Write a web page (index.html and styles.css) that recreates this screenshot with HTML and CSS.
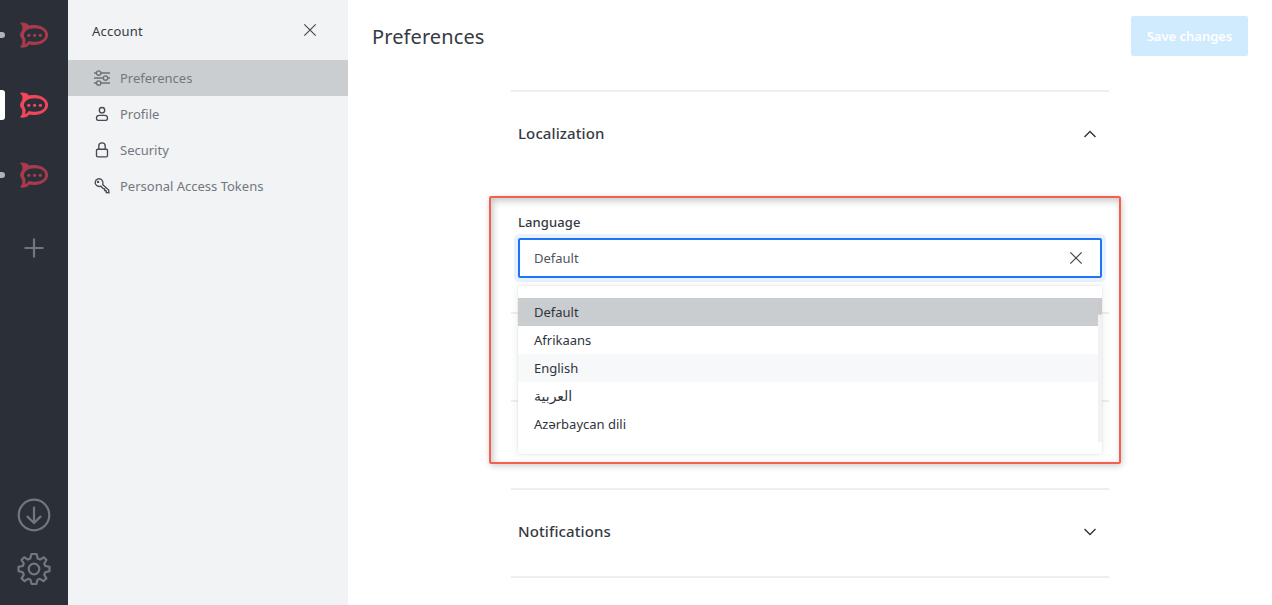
FILE: index.html
```html
<!DOCTYPE html>
<html lang="en">
<head>
<meta charset="utf-8">
<title>Preferences</title>
<link rel="stylesheet" href="styles.css">
</head>
<body>
<svg class="defs" width="0" height="0">
  <symbol id="chat" viewBox="0 0 30 28">
    <path d="M1.600 2.200C5 1.500 8.300 2.600 10.300 4.900C20 2.900 28.600 7.400 28.600 14C28.600 20.700 20 25 10.500 23C8 26.100 4.500 26.500 1.600 25.900C4.200 23.600 4.100 20.500 3.500 18.500C1 15.500 1 12.300 3.500 9.600C4.500 6.500 4 4.200 1.600 2.200Z" fill="currentColor" stroke="currentColor" stroke-width="1" stroke-linejoin="round"/>
    <path class="hollow" d="M16 7.300C22 7.300 26.200 10.100 26.200 14C26.200 18 21.800 20.700 16 20.700C13.500 20.700 11.500 20.400 9.800 19.900C8.500 21.600 7.300 22.700 5.900 23.300C6.600 21.200 6.900 19.300 6.200 17.400C4.200 14.800 4.400 12.200 6.800 9.900C9.200 8 12.200 7.300 16 7.300Z"/>
    <g fill="currentColor"><circle cx="9.800" cy="14.300" r="1.600"/><circle cx="15.600" cy="14.300" r="1.600"/><circle cx="21.300" cy="14.300" r="1.600"/></g>
  </symbol>
  <symbol id="cross" viewBox="0 0 16 16"><path d="M2.300 2.300L13.700 13.700M13.700 2.300L2.300 13.700"/></symbol>
</svg>
<div class="app">
  <nav class="servers">
    <div class="server unread"><svg class="logo"><use href="#chat"/></svg></div>
    <div class="server selected"><svg class="logo"><use href="#chat"/></svg></div>
    <div class="server unread"><svg class="logo"><use href="#chat"/></svg></div>
    <div class="add"><svg class="line" width="20" height="20" viewBox="0 0 20 20"><path d="M10 .5V19.500M.5 10H19.500"/></svg></div>
    <div class="tools">
      <svg class="line" width="34" height="34" viewBox="0 0 34 34"><circle cx="17" cy="17" r="15.300"/><path d="M17 9.500V24.600M10.500 18.600L17 25L23.500 18.600" stroke-linecap="round" stroke-linejoin="round"/></svg>
      <svg class="line" width="34" height="34" viewBox="0 0 34 34"><circle cx="17" cy="17" r="5.300"/><path stroke-linejoin="round" d="M14.500 2H19.500L20.800 6.600L23.100 7.600L26.800 5.300L29.500 8L27.200 11.500L28.300 14L32.500 14.900V19.100L28.300 20.300L27.200 22.800L29.500 26.300L26.500 29.100L23 26.800L20.500 27.800L19.400 32H14.600L13.500 27.800L11 26.800L7.500 29.100L4.500 26.300L6.800 22.800L5.700 20.300L1.500 19.100V14.900L5.700 14L6.800 11.500L4.500 8L7.200 5.300L10.900 7.600L13.200 6.600Z"/></svg>
    </div>
  </nav>

  <aside class="account">
    <header class="account-head"><span>Account</span><svg class="close"><use href="#cross"/></svg></header>
    <a class="entry current"><svg class="glyph" viewBox="0 0 20 20"><path d="M2 5H4.400M9 5H18M2 10H11.200M15.800 10H18M2 15H4.400M9 15H18"/><circle cx="6.700" cy="5" r="2.200"/><circle cx="13.500" cy="10" r="2.200"/><circle cx="6.700" cy="15" r="2.200"/></svg><span>Preferences</span></a>
    <a class="entry"><svg class="glyph dark" viewBox="0 0 20 20"><circle cx="10" cy="6.200" r="2.700"/><path d="M7.300 11.300H12.700C14.500 11.300 15.500 12.400 15.500 14C15.500 15.400 15 16.300 14 16.300H6C5 16.300 4.500 15.400 4.500 14C4.500 12.400 5.500 11.300 7.300 11.300Z"/></svg><span>Profile</span></a>
    <a class="entry"><svg class="glyph dark" viewBox="0 0 20 20"><rect x="4.500" y="9.200" width="11" height="7.600" rx="1.300"/><path d="M6.800 9V5.900C6.800 1.900 13.200 1.900 13.200 5.900V9"/></svg><span>Security</span></a>
    <a class="entry"><svg class="glyph dark" viewBox="0 0 20 20"><path d="M10.800 8.700L16.700 14L16.900 16.700L14.300 16.500V15L12.700 14.500V13L11 12.500L8.800 10.200C5.500 11.200 2.800 8.900 3.200 6C3.700 2.500 8 1.700 10 4.200C11.200 5.700 11.300 7.200 10.800 8.700Z"/><circle cx="6.100" cy="5.900" r=".5"/></svg><span>Personal Access Tokens</span></a>
  </aside>

  <main class="page">
    <header class="page-head"><h1>Preferences</h1><button class="save">Save changes</button></header>
    <div class="accordion">
      <section class="item open">
        <div class="item-head"><h2>Localization</h2><svg class="chevron" viewBox="0 0 14 10"><path d="M1.500 8L7 2.500L12.500 8"/></svg></div>
        <div class="field">
          <label>Language</label>
          <div class="select"><span>Default</span><svg class="clear"><use href="#cross"/></svg>
            <div class="menu">
              <div class="options">
                <div class="option active">Default</div>
                <div class="option">Afrikaans</div>
                <div class="option hover">English</div>
                <div class="option"><bdi class="arabic">العربية</bdi></div>
                <div class="option">Azərbaycan dili</div>
              </div>
              <div class="track"><div class="thumb"></div></div>
            </div>
          </div>
          <div class="frame"></div>
        </div>
      </section>
      <section class="item"></section>
      <section class="item"></section>
      <section class="item last">
        <div class="item-head"><h2>Notifications</h2><svg class="chevron" viewBox="0 0 14 10"><path d="M1.500 2L7 7.500L12.500 2"/></svg></div>
      </section>
    </div>
  </main>
</div>
</body>
</html>
```
FILE: styles.css
```css
* { box-sizing: border-box; }
body { margin: 0; font-family: "Noto Sans", "Open Sans", sans-serif; font-size: 13px; color: #353a43; background: #fff; overflow: hidden; }
.defs { position: absolute; }
.app { display: flex; height: 605px; }

.servers { width: 68px; background: #2b2f38; display: flex; flex-direction: column; }
.server { height: 70px; display: flex; align-items: center; justify-content: center; position: relative; color: #aa3a4c; }
.server.selected { color: #f5455c; }
.server::before { content: ""; position: absolute; left: 0; }
.unread::before { top: 32px; width: 5px; height: 6px; background: #b0b2b5; border-radius: 0 3px 3px 0; }
.selected::before { top: 20px; width: 5px; height: 30px; background: #fff; border-radius: 0 3px 3px 0; }
.logo { width: 30px; height: 28px; }
.hollow { fill: #2b2f38; }
.line { fill: none; stroke: #72777f; stroke-width: 2.2; }
.add { height: 76px; display: flex; align-items: center; justify-content: center; }
.tools { margin-top: auto; padding-bottom: 19px; display: flex; flex-direction: column; align-items: center; gap: 20px; }

.account { width: 280px; background: #f1f3f5; }
.account-head { height: 60px; padding: 2px 30px 0 24px; display: flex; align-items: center; justify-content: space-between; letter-spacing: .2px; }
.close, .clear { width: 16px; height: 16px; fill: none; stroke: #454a52; stroke-width: 1.2; }
.close { margin-top: -2px; }
.entry { height: 36px; padding-left: 24px; display: flex; align-items: center; gap: 8px; color: #72777f; }
.current { background: #cbced1; }
.glyph { width: 20px; height: 20px; fill: none; stroke: #6c727a; stroke-width: 1.35; }
.dark { stroke: #454a52; }

.page { flex: 1; min-width: 0; }
.page-head { height: 90px; padding: 16px 24px 0; display: flex; justify-content: space-between; align-items: flex-start; }
h1 { margin: 6px 0 0; font-size: 20px; line-height: 30px; font-weight: 400; letter-spacing: .1px; }
.save { width: 117px; height: 40px; padding: 0; border: 0; border-radius: 2px; background: #d1ebfe; color: #fff; font: 600 13px "Noto Sans", sans-serif; }
.accordion { width: 598px; margin-left: 163px; }
.item { height: 88px; border-top: 2px solid #eeeeef; }
.item.open { height: 222px; }
.item.last { height: 90px; border-bottom: 2px solid #eeeeef; }
.item-head { height: 84px; padding: 0 12px 0 7px; display: flex; align-items: center; justify-content: space-between; }
h2 { margin: -2px 0 0; font-size: 15px; font-weight: 500; letter-spacing: .1px; }
.chevron { width: 14px; height: 10px; fill: none; stroke: #2f343d; stroke-width: 1.4; }
.field { position: relative; padding: 36px 7px 0; }
label { display: block; height: 26px; line-height: 20px; font-weight: 500; letter-spacing: .1px; }
.select { position: relative; height: 40px; border: 2px solid #1d74f5; border-radius: 2px; box-shadow: 0 0 0 4px #e8f2ff; display: flex; align-items: center; justify-content: space-between; padding: 0 16px 0 14px; color: #50555d; }
.menu { position: absolute; z-index: 2; top: 46px; left: -2px; width: 584px; height: 168px; padding: 12px 0; background: #fff; border-radius: 2px; box-shadow: 0 0 2px rgba(47,52,61,.15), 0 0 10px rgba(47,52,61,.08); display: flex; color: #2f343d; }
.options { flex: 1; }
.option { height: 28px; line-height: 28px; padding-left: 16px; }
.active { background: #cacdcf; }
.hover { background: #f7f8fa; }
.arabic { font-family: "DejaVu Sans", sans-serif; font-size: 14px; letter-spacing: 0; }
.track { width: 4px; height: 144px; background: #f2f2f2; }
.thumb { height: 17px; background: #cacaca; border-radius: 0 0 2px 2px; }
.frame { position: absolute; z-index: 3; top: 19.5px; left: -22.5px; width: 632px; height: 268px; border: 2px solid #f4604f; border-radius: 2px; box-shadow: 1px 2px 6px rgba(0,0,0,.2), inset 2px 3px 7px rgba(0,0,0,.22); }
```
